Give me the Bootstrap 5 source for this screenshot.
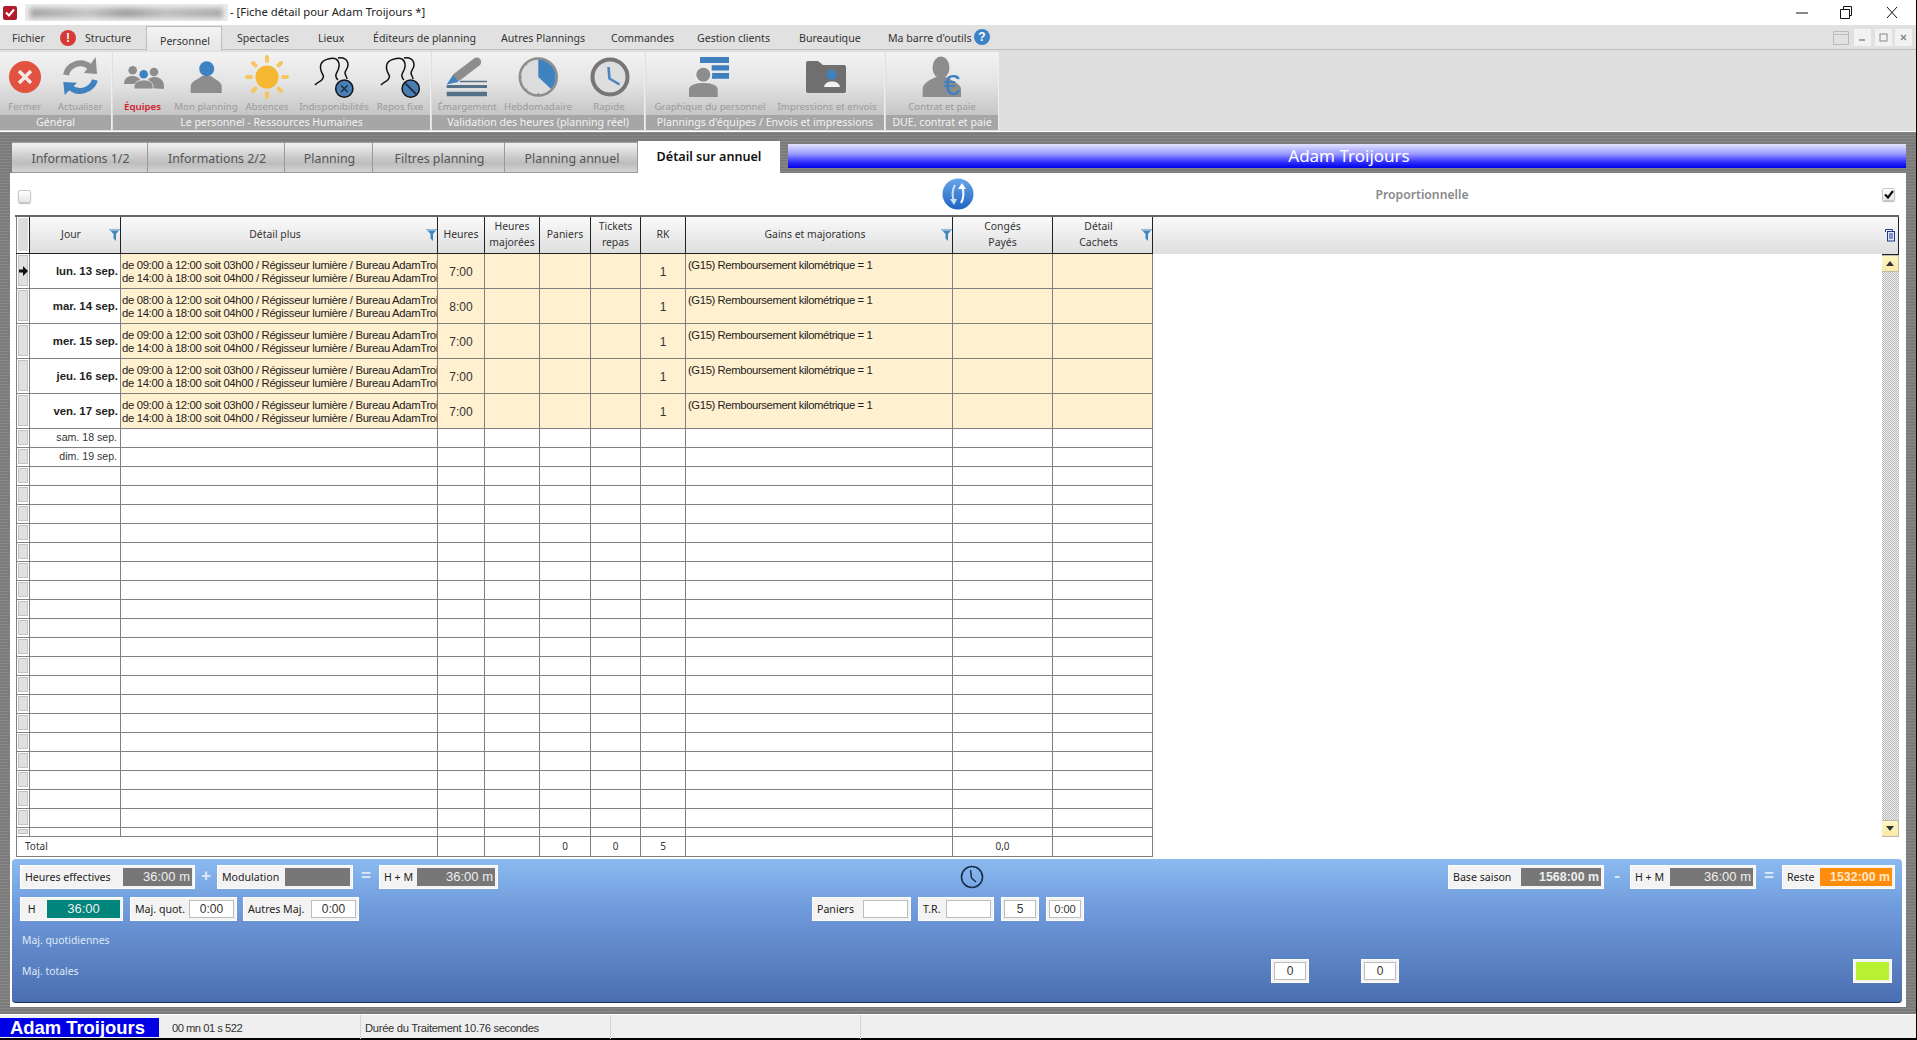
<!DOCTYPE html>
<html lang="fr">
<head>
<meta charset="utf-8">
<title>Fiche détail</title>
<link href="https://cdn.jsdelivr.net/npm/bootstrap@5.3.0/dist/css/bootstrap.min.css" rel="stylesheet">
<style>
:root{--ui:"Noto Sans","DejaVu Sans",sans-serif;--cell:"Liberation Sans",Arial,sans-serif;}
html,body{margin:0;background:#fff;}
body{width:1917px;height:1040px;overflow:hidden;font-family:var(--ui);font-size:11px;color:#222;}
.shell{width:1917px;height:1040px;display:flex;flex-direction:column;border-right:1px solid #000;border-bottom:2px solid #000;}
.titlebar{height:25px;flex:none;position:relative;}
.appico{width:14px;height:14px;margin-left:3px;background:#b01c2e;border-radius:2px;}
.blurname{width:203px;height:17px;margin-left:8px;background:#ececec;overflow:hidden;}
.blurname i{display:block;height:10px;margin:4px 5px;background:linear-gradient(90deg,#a5a5a5,#c4c4c4 30%,#a0a0a0 50%,#c0c0c0 70%,#aaa);filter:blur(2.5px);}
.wintitle{font-size:11.3px;margin-left:2px;color:#222;white-space:nowrap;}
.winbtns{margin-left:auto;margin-right:17px;gap:31px;}
.menubar{height:25px;flex:none;background:#e1e1e1;border-bottom:1px solid #bdbdbd;position:relative;}
.mi{position:absolute;top:6px;font-size:10.6px;color:#333;white-space:nowrap;line-height:15px;}
.mi-on{top:1px;left:146px;width:76px;height:25px;background:linear-gradient(#f4f4f4,#e6e6e6);border:1px solid #bdbdbd;border-bottom:0;text-align:center;line-height:28px;z-index:1;padding-left:2px;}
.dotr{position:absolute;left:60px;top:5px;width:16px;height:16px;border-radius:50%;background:#d63a35;color:#fff;font:bold 12px/16px var(--cell);text-align:center;}
.dotb{position:absolute;left:974px;top:4px;width:16px;height:16px;border-radius:50%;background:#3b82c6;color:#fff;font:bold 12px/16px var(--cell);text-align:center;}
.ribbon{height:81px;flex:none;background:#dfdfdf;display:flex;padding-top:2px;}
.rgroup{height:78px;background:linear-gradient(#f2f2f2,#e4e4e4 40%,#c2c2c2 85%);display:flex;flex-direction:column;margin-right:1px;border-right:1px solid #eee;}
.ritems{display:flex;flex:1;}
.ritem{text-align:center;padding-top:6px;display:flex;flex-direction:column;align-items:center;position:relative;}
.ritem svg{width:48px;height:40px;overflow:visible;flex:none;}
.ritem span{font-size:9.7px;color:#9a9a9a;line-height:13px;margin-top:2px;white-space:nowrap;}
.ritem span.hot{color:#d0202c;font-weight:600;}
.rlabel{height:15px;background:#a6a6a6;color:#f2f2f2;text-align:center;font-size:10.6px;line-height:15px;white-space:nowrap;}
.mainarea{flex:1;min-height:0;background:#7b7b7b repeating-linear-gradient(0deg,#7b7b7b 0 2px,#878787 2px 3px);padding:10px 3px 7px 10px;display:flex;flex-direction:column;border-top:1px solid #fff;}
.tabrow{height:31px;flex:none;display:flex;padding-left:2px;}
.ftab{height:31px;background:linear-gradient(#f2f2f2,#d6d6d6 35%,#bdbdbd 70%,#d4d4d4);border:1px solid #9a9a9a;border-left:0;font-size:12.4px;color:#555;text-align:center;line-height:31px;white-space:nowrap;padding-left:2px;}
.ftab.on{background:#fff;border:0;color:#111;font-weight:600;font-size:12.6px;height:32px;margin-top:-1px;line-height:31px;padding-left:0;}
.banner{height:24px;margin:2px 7px 0 8px;flex:1;background:linear-gradient(#e4e4ff,#9c9cff 40%,#3030ff 75%,#0000e6);color:#fff;font-size:17px;line-height:24px;text-align:center;padding-left:4px;}
.sheet{flex:1;min-height:0;background:#fff;margin-right:7px;display:flex;flex-direction:column;}
.toolrow{height:42px;flex:none;display:flex;align-items:center;position:relative;padding:0 11px 0 8px;}
.cb{width:13px;height:13px;border:1px solid #c8c8c8;border-radius:2px;background:linear-gradient(#fff,#e6e6e6);box-shadow:0 1px 1px #bbb;}
.swap{position:absolute;left:932px;top:5px;}
.prop{position:absolute;left:1362px;width:100px;top:13px;text-align:center;color:#8a8a8a;font-size:12.2px;font-weight:600;white-space:nowrap;}
.cb-on{margin-left:auto;display:flex;align-items:center;justify-content:center;}
.gridwrap{height:641px;flex:none;margin-left:5px;width:1884px;display:flex;border-top:2px solid #666;}
table.sheetgrid{width:1136px;margin:0 0 0 1px;table-layout:fixed;border-collapse:collapse;flex:none;align-self:flex-start;font-family:var(--cell);font-size:11.6px;color:#222;}
.sheetgrid th,.sheetgrid td{border:1px solid #808080;padding:0;overflow:hidden;white-space:nowrap;}
.sheetgrid thead th{height:36px;background:linear-gradient(#fafafa,#dedede);border:1px solid #222;border-top:0;font-family:var(--ui);font-weight:400;font-size:10.4px;line-height:16px;text-align:center;color:#333;position:relative;white-space:normal;padding-bottom:2px;}
.sheetgrid thead th.wf{padding-right:8px;}
.sheetgrid thead th:first-child{background:#fff;padding:1px;border-left-color:#808080;}
.sheetgrid thead th:first-child i{display:block;height:33px;background:#dcdcdc;}
.funnel{position:absolute;right:0;top:12px;width:11px;height:12px;}
.sheetgrid td.sel{background:#fff;position:relative;}
.sel b{display:block;position:absolute;inset:1px 1px 2px 1px;background:#e0e0e0;border:1px solid #c2c2c2;}
.sel svg{position:absolute;left:2px;top:50%;margin-top:-5px;width:9px;height:10px;}
tr.tall td{height:35px;}
tr.thin td{height:19px;}
tr.tiny td{height:9px;}
tr.total td{height:20px;font-family:var(--ui);font-size:10px;text-align:center;color:#333;}
tr.tall td.y{background:#fff0cf;}
td.jr{text-align:right;padding-right:2px !important;font-weight:700;font-size:11.4px;}
tr.tall td.jr{padding-top:2px !important;}
tr.thin td.jr{font-weight:400;font-size:10.6px;color:#333;padding-right:3px !important;}
td.dt{line-height:13px;font-size:11.3px;letter-spacing:-.33px;padding:5px 0 0 1px !important;vertical-align:top;}
td.dt div{overflow:hidden;}
td.ct{text-align:center;font-size:12px;color:#333;padding-top:2px !important;}
td.gn{vertical-align:top;padding:4px 0 0 2px !important;font-size:11.3px;letter-spacing:-.4px;line-height:14px;}
.filler{flex:1;display:flex;flex-direction:column;}
.fhead{height:37px;background:linear-gradient(#fafafa,#dedede);border-right:1px solid #222;position:relative;flex:none;}
.fhead svg{position:absolute;right:2px;top:11px;}
.fbody{flex:1;display:flex;justify-content:flex-end;}
.sbar{width:17px;height:583px;display:flex;flex-direction:column;background:repeating-conic-gradient(#bbb 0 25%,#eee 0 50%) 0 0/2px 2px;border-top:1px solid #222;}
.sbtn{height:17px;background:linear-gradient(#fff6c4,#fbe9a6);border:1px solid #bba;border-left:0;display:flex;align-items:center;justify-content:center;flex:none;}
.tri-u{width:0;height:0;border:4px solid transparent;border-bottom:5px solid #333;border-top:0;}
.tri-d{width:0;height:0;border:4px solid transparent;border-top:5px solid #333;border-bottom:0;}
.panel{height:144px;flex:none;margin:3px 4px 0 2px;border-radius:4px;background:linear-gradient(#8bbaf0,#6f9adb 35%,#4b6fb0);padding:6px 7px 0 8px;border-bottom:1px solid #203050;}
.prow{display:flex;height:24px;align-items:stretch;}
.fld{background:#f3f3f3;border:1px solid #fff;display:flex;align-items:stretch;padding:2px;height:24px;font-size:10.6px;color:#222;white-space:nowrap;}
.fld label{flex:1;padding-left:2px;line-height:18px;margin:0;}
.val{background:#777;color:#eee;font:700 12.4px/18px var(--cell);text-align:right;padding-right:2px;}
.val.thin{font-weight:400;font-size:13px;}
.inp{background:#fff;border:1px solid #bdbdbd;font:12px/17px var(--cell);text-align:center;color:#333;}
.op{color:#dbe9fb;font:700 17px/22px var(--cell);text-align:center;}
.lbl2{color:#dfe9f7;font-size:10.4px;padding-left:2px;}
.statusbar{height:24px;flex:none;background:#efefef;display:flex;align-items:center;border-top:1px solid #fff;font-family:var(--cell);font-size:11.2px;color:#333;position:relative;}
.sname{width:159px;height:19px;margin-top:1px;background:#0000e6;color:#fff;font:700 18.4px/19px var(--cell);padding-left:10px;white-space:nowrap;}
.stxt{padding-top:3px;white-space:nowrap;}
.sep{width:1px;height:24px;background:#d4d4d4;}
</style>
</head>
<body>
<svg width="0" height="0" class="position-absolute">
<defs>
<symbol id="fn" viewBox="0 0 11 12"><path d="M0 0H11L7 5V12L4.500 9.500V5Z" fill="#3f86bd"/><path d="M0 0H11L9 2H2Z" fill="#8fb8d6"/></symbol>
</defs>
</svg>
<div class="shell">
  <div class="titlebar d-flex align-items-center">
    <div class="appico d-flex align-items-center justify-content-center"><svg width="10" height="9" viewBox="0 0 10 9"><path d="M1 4.500L4 7.500L9 1.500" fill="none" stroke="#fff" stroke-width="2"/></svg></div>
    <div class="blurname"><i></i></div>
    <div class="wintitle">- [Fiche détail pour Adam Troijours *]</div>
    <div class="winbtns d-flex align-items-center">
      <svg width="14" height="14" viewBox="0 0 14 14"><path d="M1 7H13" stroke="#111" fill="none"/></svg>
      <svg width="14" height="14" viewBox="0 0 14 14"><path d="M3.500 3.500V.5H11.500V9.500H9.500M.5 3.500H9.500V12.500H.5Z" stroke="#111" fill="none"/></svg>
      <svg width="14" height="14" viewBox="0 0 14 14"><path d="M2 1L12 12M12 1L2 12" stroke="#111" fill="none"/></svg>
    </div>
  </div>
  <div class="menubar">
    <span class="mi" style="left:12px">Fichier</span><span class="dotr">!</span><span class="mi" style="left:85px">Structure</span>
    <span class="mi mi-on">Personnel</span>
    <span class="mi" style="left:237px">Spectacles</span><span class="mi" style="left:318px">Lieux</span><span class="mi" style="left:373px">Éditeurs de planning</span><span class="mi" style="left:501px">Autres Plannings</span><span class="mi" style="left:611px">Commandes</span><span class="mi" style="left:697px">Gestion clients</span><span class="mi" style="left:799px">Bureautique</span><span class="mi" style="left:888px">Ma barre d'outils</span><span class="dotb">?</span>
    <svg class="position-absolute" style="left:1832px;top:4px" width="80" height="17" viewBox="0 0 80 17"><path d="M1.500 2.500H16.500V15.500H1.500ZM1.500 5.500H16.500" fill="none" stroke="#bbb"/><rect x="22" y="0" width="17" height="17" fill="#f2f2f2"/><rect x="43" y="0" width="17" height="17" fill="#f2f2f2"/><rect x="63" y="0" width="17" height="17" fill="#f2f2f2"/><path d="M27 11H33" stroke="#888" stroke-width="1.500"/><rect x="48" y="5" width="7" height="7" fill="none" stroke="#888"/><path d="M69 6L74 11M74 6L69 11" stroke="#888" stroke-width="1.500"/></svg>
  </div>
  <div class="ribbon">
    <div class="rgroup" style="width:112px">
      <div class="ritems">
        <div class="ritem" style="width:50px"><svg viewBox="0 0 48 40"><circle cx="24" cy="19" r="16" fill="#e25241"/><path d="M18 13L30 25M30 13L18 25" stroke="#f5e9e4" stroke-width="3.500"/></svg><span>Fermer</span></div>
        <div class="ritem" style="width:62px"><svg viewBox="0 0 48 40"><path d="M10 17C12 7 25 1 34 9" fill="none" stroke="#8f8f8f" stroke-width="6"/><path d="M39.700 -1L41 16L28 15Z" fill="#8f8f8f"/><path d="M39 22C36 32 22 37 14 29" fill="none" stroke="#3f82c0" stroke-width="6"/><path d="M8.700 37L7.300 24L21 24.700Z" fill="#3f82c0"/></svg><span>Actualiser</span></div>
      </div>
      <div class="rlabel">Général</div>
    </div>
    <div class="rgroup" style="width:318px">
      <div class="ritems">
        <div class="ritem" style="width:59px"><svg viewBox="0 0 48 40"><circle cx="13.700" cy="12.300" r="4.300" fill="#8d8d8d"/><circle cx="35" cy="14" r="4.300" fill="#8d8d8d"/><path d="M5 26C5 20 9 18 13 18C18 18 22 20 22 26Z" fill="#8d8d8d"/><path d="M28 27C28 21 31 19 36 19C40 19 45 22 45 28V31L30 30Z" fill="#8d8d8d"/><circle cx="24.700" cy="16.300" r="4.300" fill="#3f82c0"/><path d="M15 31V29C15 24 20 22 25 22C30 22 34 24 34 29V31Z" fill="#8d8d8d" stroke="#e8e8e8" stroke-width=".8"/></svg><span class="hot">Équipes</span></div>
        <div class="ritem" style="width:68px"><svg viewBox="0 0 48 40"><path d="M8.700 35V28C9 23 17 21 20 18H29C32 21 39 23 39.700 28V35Z" fill="#8d8d8d"/><circle cx="24.700" cy="10.700" r="7.500" fill="#3f82c0"/></svg><span>Mon planning</span></div>
        <div class="ritem" style="width:54px"><svg viewBox="0 0 48 40"><g stroke="#f6c660" stroke-width="4" stroke-linecap="round"><path d="M24 -1V3M24 35V39M4 19H8M40 19H44M10 5L12.500 7.500M35.500 30.500L38 33M10 33L12.500 30.500M35.500 7.500L38 5"/></g><circle cx="24" cy="19" r="11.500" fill="#f5b731"/></svg><span>Absences</span></div>
        <div class="ritem" style="width:80px"><svg viewBox="0 0 48 40"><path d="M5 27C8 23 13 24 13.500 18C12 15 9 11 11 6C13 1 25 -2 28 3C31 8 28 12 26.500 15C25 18 26 20 28 22" fill="none" stroke="#111" stroke-width="1.500"/><path d="M28 0C33 -1 38 1 38 7C38 11 35 12 35 15C35 17 37 19 37 21" fill="none" stroke="#111" stroke-width="1.500"/><circle cx="34.300" cy="30.700" r="8.600" fill="#4a7fb5" stroke="#111" stroke-width="1.500"/><path d="M31 27.500L37.500 34M37.500 27.500L31 34" stroke="#1c2f45" stroke-width="1.500"/></svg><span>Indisponibilités</span></div>
        <div class="ritem" style="width:52px"><svg viewBox="0 0 48 40"><path d="M5 27C8 23 13 24 13.500 18C12 15 9 11 11 6C13 1 25 -2 28 3C31 8 28 12 26.500 15C25 18 26 20 28 22" fill="none" stroke="#111" stroke-width="1.500"/><path d="M28 0C33 -1 38 1 38 7C38 11 35 12 35 15C35 17 37 19 37 21" fill="none" stroke="#111" stroke-width="1.500"/><circle cx="34.700" cy="30.700" r="8.600" fill="#4a7fb5" stroke="#111" stroke-width="1.500"/><path d="M29.500 25.500L40 36" stroke="#1c2f45" stroke-width="1.800"/></svg><span>Repos fixe</span></div>
      </div>
      <div class="rlabel">Le personnel - Ressources Humaines</div>
    </div>
    <div class="rgroup" style="width:213px">
      <div class="ritems">
        <div class="ritem" style="width:70px"><svg viewBox="0 0 48 40"><path d="M33.700 4L14 19" stroke="#8d8d8d" stroke-width="9" stroke-linecap="round"/><path d="M10 17L3.700 26.500L15.500 24Z" fill="#3f82c0"/><path d="M17 23.500H44" stroke="#54718a" stroke-width="1.500"/><path d="M3.700 28.500H44" stroke="#54718a" stroke-width="3"/><path d="M3.700 36H44" stroke="#54718a" stroke-width="4.500"/></svg><span>Émargement</span></div>
        <div class="ritem" style="width:72px"><svg viewBox="0 0 48 40"><circle cx="24.300" cy="19" r="18.500" fill="#dcdcdc" stroke="#8d8d8d" stroke-width="2.500"/><path d="M24.300 19L24.300 1.500A17.500 17.500 0 0 1 37 31Z" fill="#3f82c0"/><path d="M8 19H6M24.300 35V37M13 31L11.500 32.500M13 7L11.500 5.500" stroke="#8d8d8d" stroke-width="1.500"/></svg><span>Hebdomadaire</span></div>
        <div class="ritem" style="width:70px"><svg viewBox="0 0 48 40"><circle cx="25" cy="19" r="17.500" fill="#dedede" stroke="#767676" stroke-width="4"/><path d="M23.500 9L24.500 20.500L34.500 26.500" fill="none" stroke="#4a86c0" stroke-width="2.600"/></svg><span>Rapide</span></div>
      </div>
      <div class="rlabel">Validation des heures (planning réel)</div>
    </div>
    <div class="rgroup" style="width:239px">
      <div class="ritems">
        <div class="ritem" style="width:128px"><svg viewBox="0 0 48 40"><path d="M14 -1H43V5H14ZM25.700 7.300H43V12.500H25.700ZM25.700 15H43V20.700H25.700Z" fill="#3f7fbd"/><circle cx="17.300" cy="16.700" r="9" fill="#ececec"/><circle cx="17.300" cy="16.700" r="7" fill="#8d8d8d"/><path d="M3 39V31C4 26 12 25 17 25C23 25 31 26 31.700 31V39Z" fill="#8d8d8d"/></svg><span>Graphique du personnel</span></div>
        <div class="ritem" style="width:106px"><svg viewBox="0 0 48 40"><path d="M3 5Q3 3 5 3H15L20 7H41Q43 7 43 9V33Q43 35 41 35H5Q3 35 3 33Z" fill="#6f6f6f"/><circle cx="28.700" cy="16.700" r="5" fill="#3f82c0"/><path d="M21 29Q22 23.500 29 23.500Q36 23.500 37 29Z" fill="#f2f2f2"/></svg><span>Impressions et envois</span></div>
      </div>
      <div class="rlabel">Plannings d'équipes / Envois et impressions</div>
    </div>
    <div class="rgroup" style="width:113px">
      <div class="ritems">
        <div class="ritem" style="width:112px"><svg viewBox="0 0 48 40"><ellipse cx="23" cy="9.500" rx="8.500" ry="11" fill="#8d8d8d"/><path d="M4.700 39V30C6 24 14 21 18 19H28C33 22 41 25 43 30V39Z" fill="#8d8d8d"/><text x="33.500" y="37" text-anchor="middle" font-family="Liberation Sans,sans-serif" font-size="30" fill="#3f7fc0">€</text></svg><span>Contrat et paie</span></div>
      </div>
      <div class="rlabel">DUE, contrat et paie</div>
    </div>
  </div>
  <div class="mainarea">
    <div class="tabrow">
      <div class="ftab" style="width:136px">Informations 1/2</div>
      <div class="ftab" style="width:137px">Informations 2/2</div>
      <div class="ftab" style="width:88px">Planning</div>
      <div class="ftab" style="width:132px">Filtres planning</div>
      <div class="ftab" style="width:133px">Planning annuel</div>
      <div class="ftab on" style="width:142px">Détail sur annuel</div>
      <div class="banner">Adam Troijours</div>
    </div>
    <div class="sheet">
      <div class="toolrow">
        <div class="cb" style="margin-top:4px"></div>
        <svg class="swap" width="32" height="32" viewBox="0 0 32 32"><defs><linearGradient id="bl" x1="0" y1="0" x2="0" y2="1"><stop offset="0" stop-color="#6aa5e8"/><stop offset="1" stop-color="#1f64c4"/></linearGradient></defs><circle cx="16" cy="16" r="15.500" fill="url(#bl)"/><path d="M13 7C10 12 10 18 12 24" fill="none" stroke="#cfe0f4" stroke-width="2"/><path d="M8 21L12 27L15 21Z" fill="#cfe0f4"/><path d="M19 25C22 20 22 14 20 8" fill="none" stroke="#fff" stroke-width="2"/><path d="M16 11L20 5L24 11Z" fill="#fff"/></svg>
        <div class="prop">Proportionnelle</div>
        <div class="cb cb-on"><svg width="10" height="9" viewBox="0 0 10 9"><path d="M1 4.500L4 7.500L9 1" fill="none" stroke="#111" stroke-width="2.200"/></svg></div>
      </div>
      <div class="gridwrap">
        <table class="sheetgrid">
          <colgroup><col style="width:13px"><col style="width:91px"><col style="width:317px"><col style="width:47px"><col style="width:55px"><col style="width:51px"><col style="width:50px"><col style="width:45px"><col style="width:267px"><col style="width:100px"><col style="width:100px"></colgroup>
          <thead><tr>
            <th><i></i></th>
            <th class="wf">Jour<svg class="funnel"><use href="#fn"/></svg></th>
            <th class="wf">Détail plus<svg class="funnel"><use href="#fn"/></svg></th>
            <th>Heures</th>
            <th>Heures<br>majorées</th>
            <th>Paniers</th>
            <th>Tickets<br>repas</th>
            <th>RK</th>
            <th class="wf">Gains et majorations<svg class="funnel"><use href="#fn"/></svg></th>
            <th>Congés<br>Payés</th>
            <th class="wf">Détail<br>Cachets<svg class="funnel"><use href="#fn"/></svg></th>
          </tr></thead>
          <tbody id="rows">
            <tr class="tall"><td class="sel"><b></b><svg viewBox="0 0 9 10"><path d="M0 3.500H4V0L9 5L4 10V6.500H0Z" fill="#111"/></svg></td><td class="jr">lun. 13 sep.</td><td class="y dt"><div>de 09:00 à 12:00 soit 03h00 / Régisseur lumière / Bureau AdamTroijours</div><div>de 14:00 à 18:00 soit 04h00 / Régisseur lumière / Bureau AdamTroijours</div></td><td class="y ct">7:00</td><td class="y"></td><td class="y"></td><td class="y"></td><td class="y ct">1</td><td class="y gn">(G15) Remboursement kilométrique = 1</td><td class="y"></td><td class="y"></td></tr>
            <tr class="tall"><td class="sel"><b></b></td><td class="jr">mar. 14 sep.</td><td class="y dt"><div>de 08:00 à 12:00 soit 04h00 / Régisseur lumière / Bureau AdamTroijours</div><div>de 14:00 à 18:00 soit 04h00 / Régisseur lumière / Bureau AdamTroijours</div></td><td class="y ct">8:00</td><td class="y"></td><td class="y"></td><td class="y"></td><td class="y ct">1</td><td class="y gn">(G15) Remboursement kilométrique = 1</td><td class="y"></td><td class="y"></td></tr>
            <tr class="tall"><td class="sel"><b></b></td><td class="jr">mer. 15 sep.</td><td class="y dt"><div>de 09:00 à 12:00 soit 03h00 / Régisseur lumière / Bureau AdamTroijours</div><div>de 14:00 à 18:00 soit 04h00 / Régisseur lumière / Bureau AdamTroijours</div></td><td class="y ct">7:00</td><td class="y"></td><td class="y"></td><td class="y"></td><td class="y ct">1</td><td class="y gn">(G15) Remboursement kilométrique = 1</td><td class="y"></td><td class="y"></td></tr>
            <tr class="tall"><td class="sel"><b></b></td><td class="jr">jeu. 16 sep.</td><td class="y dt"><div>de 09:00 à 12:00 soit 03h00 / Régisseur lumière / Bureau AdamTroijours</div><div>de 14:00 à 18:00 soit 04h00 / Régisseur lumière / Bureau AdamTroijours</div></td><td class="y ct">7:00</td><td class="y"></td><td class="y"></td><td class="y"></td><td class="y ct">1</td><td class="y gn">(G15) Remboursement kilométrique = 1</td><td class="y"></td><td class="y"></td></tr>
            <tr class="tall"><td class="sel"><b></b></td><td class="jr">ven. 17 sep.</td><td class="y dt"><div>de 09:00 à 12:00 soit 03h00 / Régisseur lumière / Bureau AdamTroijours</div><div>de 14:00 à 18:00 soit 04h00 / Régisseur lumière / Bureau AdamTroijours</div></td><td class="y ct">7:00</td><td class="y"></td><td class="y"></td><td class="y"></td><td class="y ct">1</td><td class="y gn">(G15) Remboursement kilométrique = 1</td><td class="y"></td><td class="y"></td></tr>
            <tr class="thin"><td class="sel"><b></b></td><td class="jr">sam. 18 sep.</td><td></td><td></td><td></td><td></td><td></td><td></td><td></td><td></td><td></td></tr>
            <tr class="thin"><td class="sel"><b></b></td><td class="jr">dim. 19 sep.</td><td></td><td></td><td></td><td></td><td></td><td></td><td></td><td></td><td></td></tr>
          </tbody>
          <tfoot>
            <tr class="total"><td colspan="3" class="text-start ps-2">Total</td><td></td><td></td><td>0</td><td>0</td><td>5</td><td></td><td>0,0</td><td></td></tr>
          </tfoot>
        </table>
        <div class="filler">
          <div class="fhead"><svg width="12" height="14" viewBox="0 0 12 14"><path d="M1.500 1.500H8.500V3.500M1.500 1.500V4" fill="none" stroke="#223a8a"/><rect x="3.500" y="3.500" width="7" height="9.500" fill="#dfe6fa" stroke="#223a8a"/><path d="M5 6H9M5 8H9M5 10H9" stroke="#223a8a"/></svg></div>
          <div class="fbody">
            <div class="sbar">
              <div class="sbtn"><div class="tri-u"></div></div>
              <div class="flex-grow-1"></div>
              <div class="sbtn"><div class="tri-d"></div></div>
            </div>
          </div>
        </div>
      </div>
      <div class="panel">
        <div class="prow">
          <div class="fld" style="width:175px"><label>Heures effectives</label><div class="val thin" style="width:69px">36:00 m</div></div>
          <div class="op" style="width:22px">+</div>
          <div class="fld" style="width:136px"><label>Modulation</label><div class="val" style="width:65px"></div></div>
          <div class="op" style="width:26px">=</div>
          <div class="fld" style="width:119px"><label>H + M</label><div class="val thin" style="width:78px">36:00 m</div></div>
          <svg class="flex-none" style="margin-left:462px" width="24" height="24" viewBox="0 0 24 24"><circle cx="12" cy="12" r="10.500" fill="none" stroke="#17304f" stroke-width="1.600"/><path d="M10.500 5L11.500 13L16 17" fill="none" stroke="#17304f" stroke-width="1.500"/></svg>
          <div class="fld ms-auto" style="width:156px"><label>Base saison</label><div class="val" style="width:80px">1568:00 m</div></div>
          <div class="op" style="width:26px">-</div>
          <div class="fld" style="width:126px"><label>H + M</label><div class="val thin" style="width:83px">36:00 m</div></div>
          <div class="op" style="width:26px">=</div>
          <div class="fld" style="width:113px"><label>Reste</label><div class="val" style="width:72px;background:#ff8c0a;color:#ffe9c8">1532:00 m</div></div>
        </div>
        <div class="prow mt-2">
          <div class="fld" style="width:103px"><label>&nbsp;H</label><div class="val thin text-center" style="width:73px;background:#00857c;padding:0">36:00</div></div>
          <div class="fld" style="width:107px;margin-left:7px"><label>Maj. quot.</label><div class="inp" style="width:45px">0:00</div></div>
          <div class="fld" style="width:116px;margin-left:6px"><label>Autres Maj.</label><div class="inp" style="width:45px">0:00</div></div>
          <div class="fld" style="width:99px;margin-left:453px"><label>Paniers</label><div class="inp" style="width:45px"></div></div>
          <div class="fld" style="width:76px;margin-left:7px"><label>T.R.</label><div class="inp" style="width:45px"></div></div>
          <div class="fld" style="width:38px;margin-left:7px"><div class="inp flex-fill">5</div></div>
          <div class="fld" style="width:38px;margin-left:7px"><div class="inp flex-fill" style="font-size:11px">0:00</div></div>
        </div>
        <div class="lbl2" style="margin-top:12px;line-height:14px">Maj. quotidiennes</div>
        <div class="prow" style="margin-top:12px">
          <div class="lbl2" style="width:1251px;line-height:24px">Maj. totales</div>
          <div class="fld" style="width:38px"><div class="inp flex-fill">0</div></div>
          <div class="fld" style="width:38px;margin-left:52px"><div class="inp flex-fill">0</div></div>
          <div class="fld ms-auto" style="width:39px;margin-right:3px"><div class="flex-fill" style="background:#b8f032"></div></div>
        </div>
      </div>
    </div>
  </div>
  <div class="statusbar">
    <div class="sname">Adam Troijours</div>
    <div style="width:13px"></div>
    <div class="stxt" style="width:188px;letter-spacing:-.5px">00 mn 01 s 522</div>
    <div class="sep"></div>
    <div class="stxt" style="width:249px;padding-left:4px;letter-spacing:-.3px">Durée du Traitement 10.76 secondes</div>
    <div class="sep"></div>
    <div style="width:249px"></div>
    <div class="sep"></div>
  </div>
</div>
<script>
var b=document.getElementById('rows'),h='';
for(var i=0;i<19;i++){h+='<tr class="thin"><td class="sel"><b></b></td>'+'<td></td>'.repeat(10)+'</tr>';}
h+='<tr class="tiny"><td class="sel"><b></b></td>'+'<td></td>'.repeat(10)+'</tr>';
b.insertAdjacentHTML('beforeend',h);
</script>
</body>
</html>
